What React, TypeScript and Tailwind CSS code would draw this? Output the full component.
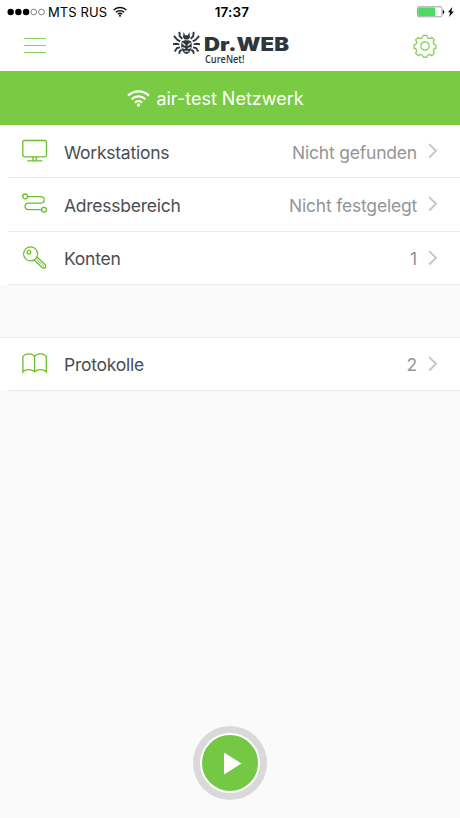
import type { ReactNode } from "react";

type RowProps = {
  icon: ReactNode;
  label: string;
  value: string;
};

const WifiGlyph = ({ className }: { className: string }) => (
  <svg viewBox="0 0 22 17" className={className} fill="none" stroke="currentColor">
    <path d="M1 6.2a14.4 14.4 0 0 1 20 0" strokeWidth="2.1" />
    <path d="M4.4 9.7a9.5 9.5 0 0 1 13.2 0" strokeWidth="2.1" />
    <path d="M7.6 12.9a5 5 0 0 1 6.8 0" strokeWidth="2.1" />
    <circle cx="11" cy="15.2" r="1.6" fill="currentColor" stroke="none" />
  </svg>
);

const MonitorIcon = () => (
  <svg width="26" height="24" viewBox="0 0 26 24" fill="none" stroke="currentColor" strokeWidth="1.3">
    <rect x="0.8" y="1.5" width="23.7" height="16.4" rx="1.8" />
    <path d="M11 18.1v3.2M14.3 18.1v3.2M5.2 21.8h15.2" />
  </svg>
);

const RouteIcon = () => (
  <svg width="26" height="24" viewBox="0 0 26 24" fill="none" stroke="currentColor" strokeWidth="1.3">
    <circle cx="3.2" cy="4.4" r="2.4" />
    <circle cx="22" cy="17.7" r="2.4" />
    <path d="M5.6 4.7h13.3a3.2 3.2 0 0 1 0 6.4H6.3a3.3 3.3 0 0 0 0 6.6h13.3" />
  </svg>
);

const KeyIcon = () => (
  <svg width="26" height="24" viewBox="0 0 26 24" fill="none" stroke="currentColor" strokeWidth="1.2">
    <circle cx="8.6" cy="7.9" r="7" />
    <circle cx="6.9" cy="6.2" r="1.9" />
    <path d="M15 11l8.5 8v2.800h-3.200L13 14.700h-1.300v-1.400" strokeLinejoin="round" />
    <path d="M13.600 12.200l8.500 8.300" strokeWidth="0.900" />
  </svg>
);

const BookIcon = () => (
  <svg width="26" height="24" viewBox="0 0 26 24" fill="none" stroke="currentColor" strokeWidth="1.3">
    <path d="M12.6 19.8V5.1C11 .8 2.6.8.9 5.1v14.7c2-3 9.4-3 11.7 0 2.3-3 9.7-3 11.7 0V5.1C22.6.8 14.2.8 12.6 5.1" />
  </svg>
);

const GearIcon = () => (
  <svg width="24" height="24" viewBox="0 0 24 24" fill="none" stroke="currentColor" strokeWidth="1.2" strokeLinejoin="round">
    <circle cx="12" cy="12" r="4.2" />
    <path d="M10.2 1.3h3.6c.2 1.8.7 2.6 1.8 3s2 .1 3.3-.9l2.5 2.5c-1 1.4-1.3 2.3-.9 3.4s1.2 1.6 2.4 1.7v3.2c-1.3.1-2 .6-2.4 1.7s-.1 2 .9 3.3l-2.5 2.5c-1.3-1-2.2-1.3-3.3-.9s-1.6 1.2-1.8 2.4h-3.6c-.2-1.3-.7-2-1.8-2.4s-2-.1-3.3.9l-2.5-2.5c1-1.3 1.3-2.2.9-3.3s-1.200-1.600-2.400-1.700V11c1.200-.1 2-.6 2.400-1.700s.1-2-.9-3.400l2.500-2.500c1.300 1 2.200 1.300 3.300.9s1.600-1.200 1.800-3z" />
  </svg>
);

const Spider = () => (
  <g fill="none" stroke="#30373c" strokeWidth="1.9">
    <path d="M9.3 7.800L6.800 5.200 6.300.8M7.200 10.400L4 8.600 1 4.800M6.400 13.400L3.400 12.800 0 13.300M7 16.300l-3 .8L1.700 20.600M8.800 18.800l-2 1.300-.6 2.700" />
    <path d="M17.700 7.800l2.500-2.600.5-4.400M19.800 10.400L23 8.600l3-3.800M20.600 13.400l3-.6 3.400.5M20 16.300l3 .8 2.300 3.500M18.200 18.800l2 1.300.6 2.700" />
    <path d="M10 6.600L10.600 1l1.500 3.200h2.800L16.400 1l.6 5.600-1.800 2h-3.400z" fill="#30373c" stroke="none" />
    <path d="M9 10.300c1.800-1.500 7.200-1.500 9 0 2 4.500-.2 12.500-4.500 12.700-4.300-.2-6.500-8.200-4.500-12.700z" fill="#30373c" stroke="none" />
    <path d="M9.400 12l3 2.500M17.600 12l-3 2.500M9.200 16.600l3 .9M17.800 16.600l-3 .9M11.500 20.300h4" stroke="#fff" strokeWidth="1.1" />
  </g>
);

const Logo = () => (
  <svg width="118" height="38" viewBox="0 0 118 38" className="block">
    <Spider />
    <text
      x="31"
      y="20"
      textLength="85"
      lengthAdjust="spacingAndGlyphs"
      className="fill-[#30373c] font-['Inter',sans-serif] text-[18.5px] font-black"
    >
      Dr.WEB
    </text>
    <text
      x="32"
      y="32"
      textLength="39.5"
      lengthAdjust="spacingAndGlyphs"
      className="fill-[#30373c] font-['Open_Sans',sans-serif] text-[10px] font-semibold"
    >
      CureNet!
    </text>
  </svg>
);

const StatusBar = () => (
  <div className="flex h-6 items-center justify-between pl-[7px] pr-[5px] text-[13px] text-black">
    <div className="flex w-[180px] items-center">
      <svg width="38" height="8" viewBox="0 0 38 8">
        <circle cx="3.7" cy="4" r="3.2" />
        <circle cx="11.4" cy="4" r="3.2" />
        <circle cx="19.1" cy="4" r="3.2" />
        <circle cx="26.8" cy="4" r="2.9" fill="none" stroke="#333" strokeWidth="0.6" />
        <circle cx="34.5" cy="4" r="2.9" fill="none" stroke="#333" strokeWidth="0.6" />
      </svg>
      <span className="ml-[3px] pt-px tracking-[0.1px]">MTS RUS</span>
      <WifiGlyph className="ml-1.5 mb-0.5 h-[11px] w-[14px]" />
    </div>
    <span className="pl-0.5 text-[13.5px] font-semibold tracking-[0.2px]">17:37</span>
    <div className="flex w-[180px] items-center justify-end">
      <svg width="38" height="12" viewBox="0 0 38 12">
        <rect x="0.5" y="0.8" width="24.5" height="10" rx="1.6" fill="#fff" stroke="#777" strokeWidth="0.7" />
        <rect x="1.2" y="1.5" width="17" height="8.6" rx="0.8" fill="#4cd964" />
        <path d="M25.8 4v4c1.9-.4 1.9-3.6 0-4z" />
        <path d="M35.3 1l-4.3 5.3h2.3L32 11l4.800-5.600h-2.500z" />
      </svg>
    </div>
  </div>
);

const Row = ({ icon, label, value }: RowProps) => (
  <div className="h-[53.3px] bg-white pl-2">
    <div className="flex h-full items-center border-b border-[#e9e9e9] pl-3.5 pr-[22px] text-[17.5px]">
      <span className="w-[42px] text-[#6abf2c]">{icon}</span>
      <span className="pt-[3px] tracking-[-0.25px] text-[#4b4e51]">{label}</span>
      <span className="ml-auto pt-[3px] tracking-[-0.2px] text-[#959595]">{value}</span>
      <svg width="10" height="16" viewBox="0 0 10 16" fill="none" stroke="#c4c4c4" strokeWidth="1.8" className="ml-[11px]">
        <path d="M1.2 1.200L8 7.800l-6.800 6.700" />
      </svg>
    </div>
  </div>
);

const App = () => {
  return (
    <div className="flex h-[818px] w-[460px] flex-col overflow-hidden bg-[#fafafa] font-['Inter',sans-serif]">
      <header className="h-[71px] shrink-0 bg-white">
        <StatusBar />
        <div className="flex h-[47px] items-start justify-between pl-6 pr-[23px] pt-1.5">
          <button className="mt-2 flex flex-col gap-[5.5px]" aria-label="Menu">
            <span className="h-[1.4px] w-[22px] bg-[#8bd05f]" />
            <span className="h-[1.4px] w-[22px] bg-[#8bd05f]" />
            <span className="h-[1.4px] w-[22px] bg-[#8bd05f]" />
          </button>
          <div className="pl-[5px] pt-px">
            <Logo />
          </div>
          <button className="mt-1 text-[#7bcb4b]" aria-label="Settings">
            <GearIcon />
          </button>
        </div>
      </header>

      <div className="flex h-[54px] shrink-0 items-center justify-center bg-[#79cb43] pr-[29px] text-lg text-white">
        <WifiGlyph className="mr-1.5 h-[18px] w-[23px]" />
        <span className="pt-px">air-test Netzwerk</span>
      </div>

      <section>
        <Row icon={<MonitorIcon />} label="Workstations" value="Nicht gefunden" />
        <Row icon={<RouteIcon />} label="Adressbereich" value="Nicht festgelegt" />
        <Row icon={<KeyIcon />} label="Konten" value="1" />
      </section>

      <section className="mt-[52px] border-t border-[#ececec]">
        <Row icon={<BookIcon />} label="Protokolle" value="2" />
      </section>

      <div className="mb-[18px] mt-auto flex justify-center">
        <button
          className="flex size-[74px] items-center justify-center rounded-full bg-[#d9d9d9]"
          aria-label="Start"
        >
          <span className="flex size-[60px] items-center justify-center rounded-full border-2 border-white bg-[#74c843]">
            <svg width="18" height="23" viewBox="0 0 18 23" className="ml-[5px]">
              <path d="M0 0.5L17.5 11.5L0 22.5z" fill="#fff" />
            </svg>
          </span>
        </button>
      </div>
    </div>
  );
};

export default App;
